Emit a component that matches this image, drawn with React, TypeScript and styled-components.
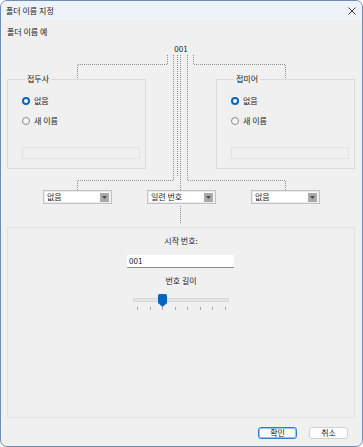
import React from "react";
import styled, { createGlobalStyle } from "styled-components";

const Global = createGlobalStyle`
  html, body { margin: 0; padding: 0; background: #ffffff; }
  body { font-family: "Noto Sans CJK KR", "Noto Sans", sans-serif; font-size: 8px; color: #1b1b1b; }
  * { box-sizing: border-box; }
`;

const Window = styled.div`
  position: relative;
  width: 363px;
  height: 447px;
  border: 1px solid #6f8db0;
  border-radius: 7px;
  overflow: hidden;
  background: #f0f0f0;
  display: flex;
  flex-direction: column;
`;

const TitleBar = styled.div`
  height: 19px;
  flex: none;
  background: #eef3f9;
  display: flex;
  align-items: center;
  justify-content: space-between;
  padding: 0 6px 0 5px;
  font-size: 8px;
  line-height: 10px;
`;

const Body = styled.div`
  flex: 1;
  display: flex;
  flex-direction: column;
  padding: 0 7px 0 6px;
  min-height: 0;
`;

const Text = styled.div<{ $mt?: number; $center?: boolean }>`
  font-size: 8px;
  line-height: 10px;
  margin-top: ${(p) => p.$mt ?? 0}px;
  text-align: ${(p) => (p.$center ? "center" : "left")};
  white-space: nowrap;
`;

const GroupsRow = styled.div`
  display: flex;
  justify-content: space-between;
  margin-top: 20px;
`;

const Group = styled.fieldset`
  width: 139px;
  margin: 0;
  padding: 0 5px 9px 14px;
  border: 1px solid #dadada;
  min-inline-size: 0;
  display: flex;
  flex-direction: column;
`;

const Legend = styled.legend`
  padding: 0 2px;
  margin-left: 3px;
  font-size: 8px;
  line-height: 10px;
`;

const RadioRow = styled.label<{ $mt: number }>`
  display: flex;
  align-items: center;
  gap: 4px;
  height: 10px;
  margin-top: ${(p) => p.$mt}px;
  line-height: 10px;
`;

const RadioDot = styled.span<{ $on?: boolean }>`
  width: 8px;
  height: 8px;
  border-radius: 50%;
  flex: none;
  background: ${(p) => (p.$on ? "#ffffff" : "#f6f6f6")};
  border: ${(p) => (p.$on ? "2.5px solid #0067c0" : "1px solid #8a8a8a")};
`;

const DisabledBox = styled.div`
  height: 12px;
  margin-top: 21px;
  border: 1px solid #e2e2e2;
  background: #f0f0f0;
`;

const DropRow = styled.div`
  display: flex;
  justify-content: center;
  gap: 35px;
  margin-top: 21px;
  padding-left: 1px;
`;

const Dropdown = styled.div`
  width: 69px;
  height: 14px;
  background: #ffffff;
  border: 1px solid #c2c2c2;
  box-shadow: inset 0 0 0 1px #ececec;
  display: flex;
  align-items: center;
  justify-content: space-between;
  padding: 0 2px 0 3px;
  line-height: 10px;
`;

const ArrowBtn = styled.span`
  width: 9px;
  height: 9px;
  background: #a9a9a9;
  display: flex;
  align-items: center;
  justify-content: center;
`;

const Panel = styled.div`
  flex: 1;
  margin-top: 23px;
  border: 1px solid #e2e2e2;
  display: flex;
  flex-direction: column;
  align-items: center;
  padding-top: 8px;
`;

const NumberInput = styled.div`
  width: 107px;
  height: 13px;
  margin-top: 9px;
  background: #ffffff;
  border-bottom: 1px solid #8c8c8c;
  padding-left: 2px;
  line-height: 12px;
  margin-right: 1px;
`;

const Slider = styled.div`
  width: 96px;
  margin-top: 8px;
  position: relative;
  height: 17px;
  margin-left: 0px;
`;

const Track = styled.div`
  margin-top: 4px;
  height: 4px;
  background: #e4e4e4;
  border: 1px solid #d8d8d8;
`;

const Ticks = styled.div`
  display: flex;
  justify-content: space-between;
  padding: 0 3px 0 4px;
  margin-top: 5px;
`;

const Tick = styled.span`
  width: 1px;
  height: 3px;
  background: #a6a6a6;
`;

const Thumb = styled.svg`
  position: absolute;
  top: 0;
`;

const Footer = styled.div`
  flex: none;
  display: flex;
  justify-content: flex-end;
  gap: 12px;
  padding: 9px 7px 7px 0;
`;

const Button = styled.button<{ $primary?: boolean }>`
  width: 39px;
  height: 12px;
  padding: 0;
  font-family: inherit;
  font-size: 8px;
  line-height: 10px;
  color: #1b1b1b;
  background: #fdfdfd;
  border-radius: 3px;
  border: 1px solid ${(p) => (p.$primary ? "#2f7fd0" : "#d2d2d2")};
  box-shadow: ${(p) => (p.$primary ? "inset 0 0 0 1px #9cc3ea" : "none")};
`;

const Connectors = styled.svg`
  position: absolute;
  left: -1px;
  top: -1px;
  pointer-events: none;
`;

const ticks = [0, 1, 2, 3, 4, 5, 6, 7];
const sliderValue = 2;

export default function App() {
  const thumbLeft = 4 + (sliderValue * 87) / 7 - 4;
  return (
    <>
      <Global />
      <Window>
        <TitleBar>
          <span>폴더 이름 지정</span>
          <svg width="8" height="8" viewBox="0 0 8 8">
            <path d="M0.5 0.5 L7.5 7.5 M7.5 0.5 L0.5 7.5" stroke="#3a3a3a" strokeWidth="1" />
          </svg>
        </TitleBar>
        <Body>
          <Text $mt={7}>폴더 이름 예</Text>
          <Text $mt={7} $center>001</Text>
          <GroupsRow>
            <Group>
              <Legend>접두사</Legend>
              <RadioRow $mt={12}>
                <RadioDot $on />
                없음
              </RadioRow>
              <RadioRow $mt={10}>
                <RadioDot />
                새 이름
              </RadioRow>
              <DisabledBox />
            </Group>
            <Group>
              <Legend>접미어</Legend>
              <RadioRow $mt={12}>
                <RadioDot $on />
                없음
              </RadioRow>
              <RadioRow $mt={10}>
                <RadioDot />
                새 이름
              </RadioRow>
              <DisabledBox />
            </Group>
          </GroupsRow>
          <DropRow>
            {["없음", "일련 번호", "없음"].map((t, i) => (
              <Dropdown key={i}>
                <span>{t}</span>
                <ArrowBtn>
                  <svg width="5" height="3" viewBox="0 0 5 3">
                    <path d="M0 0 H5 L2.5 3 Z" fill="#4a4a4a" />
                  </svg>
                </ArrowBtn>
              </Dropdown>
            ))}
          </DropRow>
          <Panel>
            <Text>시작 번호:</Text>
            <NumberInput>001</NumberInput>
            <Text $mt={8}>번호 길이</Text>
            <Slider>
              <Track />
              <Ticks>
                {ticks.map((t) => (
                  <Tick key={t} />
                ))}
              </Ticks>
              <Thumb width="9" height="13" viewBox="0 0 9 13" style={{ left: thumbLeft }}>
                <path d="M1.5 0 H7.5 Q9 0 9 1.5 V9 L4.5 13 L0 9 V1.5 Q0 0 1.5 0 Z" fill="#0067c0" />
              </Thumb>
            </Slider>
          </Panel>
          <Footer>
            <Button $primary>확인</Button>
            <Button>취소</Button>
          </Footer>
        </Body>
        <Connectors width="363" height="447" viewBox="0 0 363 447">
          <g fill="none" stroke="#8e8e8e" strokeWidth="1" strokeDasharray="1 1">
            <path d="M167.5 55 V64.5 H77.5 V79" />
            <path d="M193.5 55 V64.5 H285.5 V79" />
            <path d="M173.5 55 V180.5 H77.5 V191" />
            <path d="M187.5 55 V180.5 H285.5 V191" />
            <path d="M177.5 55 V176" />
            <path d="M180.5 55 V191" />
            <path d="M180.5 206 V223" />
          </g>
        </Connectors>
      </Window>
    </>
  );
}
